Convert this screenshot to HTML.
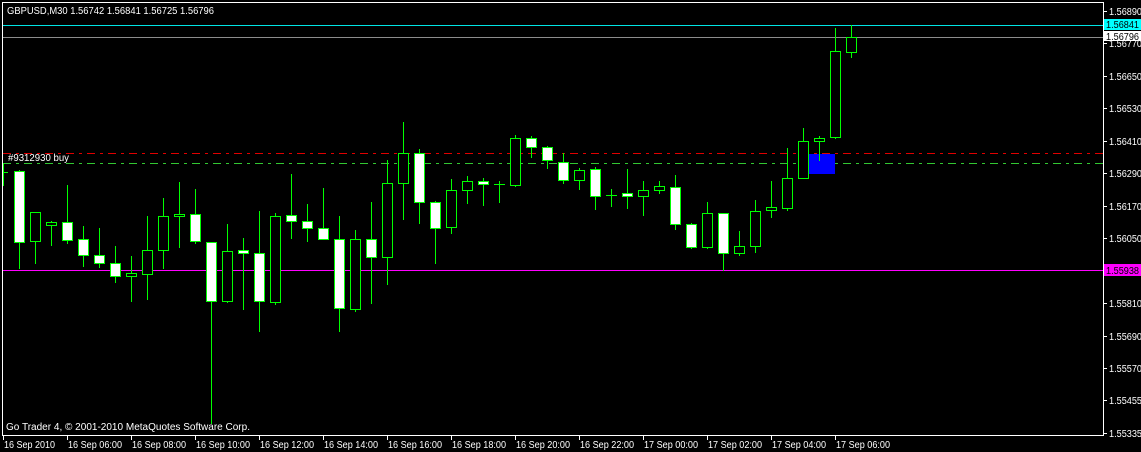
<!DOCTYPE html>
<html><head><meta charset="utf-8"><style>
html,body{margin:0;padding:0;background:#000;width:1141px;height:452px;overflow:hidden}
svg{display:block}
text{font-family:"Liberation Sans",sans-serif;font-size:10px;fill:#fff}
</style></head><body>
<svg width="1141" height="452" xmlns="http://www.w3.org/2000/svg" shape-rendering="crispEdges">
<rect width="1141" height="452" fill="#000"/>
<!-- frame -->
<rect x="2.5" y="2.5" width="1101" height="433" fill="none" stroke="#fff" stroke-width="1"/>
<!-- horizontal lines -->
<line x1="3" y1="25.5" x2="1103" y2="25.5" stroke="#00e5e5"/>
<line x1="3" y1="37.5" x2="1103" y2="37.5" stroke="#8c8c8c"/>
<line x1="3" y1="153.5" x2="1103" y2="153.5" stroke="#e00000" stroke-dasharray="8 5 3 5"/>
<line x1="3" y1="163.5" x2="1103" y2="163.5" stroke="#32c832" stroke-dasharray="8 5 3 5"/>
<rect x="809" y="154" width="26" height="20" fill="#0000ff"/>
<line x1="3" y1="270.5" x2="1103" y2="270.5" stroke="#ff00ff"/>
<g id="c" stroke="#00ff00" stroke-width="1"></g>
<!-- text -->
<text x="7" y="14" textLength="207" lengthAdjust="spacingAndGlyphs">GBPUSD,M30  1.56742 1.56841 1.56725 1.56796</text>
<text x="8" y="161" textLength="61" lengthAdjust="spacingAndGlyphs">#9312930 buy</text>
<text x="6" y="430" textLength="244" lengthAdjust="spacingAndGlyphs">Go Trader 4, © 2001-2010 MetaQuotes Software Corp.</text>
<g id="axis"></g>
<!-- price labels -->
<rect x="1104" y="19" width="37" height="11" fill="#00ffff"/>
<rect x="1104" y="31" width="37" height="10" fill="#fff"/>
<rect x="1104" y="264" width="37" height="12" fill="#ff00ff"/>
</svg>
<script>
var NS="http://www.w3.org/2000/svg";
var g=document.getElementById('c');
function el(n,a,p){var e=document.createElementNS(NS,n);for(var k in a)e.setAttribute(k,a[k]);(p||g).appendChild(e);return e;}
// partial left candle
el('line',{x1:3.5,y1:163,x2:3.5,y2:186});el('line',{x1:3,y1:172.5,x2:8,y2:172.5});
// [center, bodyTop, bodyBottom, wickTop, wickBottom, white]
var C=[[19,171,242,170,268,1],[35,212,241,212,263,0],[51,222,225,221,245,0],[67,222,240,185,243,1],[83,239,255,226,266,1],[99,255,263,228,267,1],[115,263,276,246,282,1],[131,273,276,256,301,0],[147,250,274,216,299,0],[163,216,250,198,268,0],[179,214,216,182,247,0],[195,214,241,189,243,1],[211,242,301,242,423,1],[227,251,301,224,302,0],[243,250,253,238,309,1],[259,253,301,211,331,1],[275,216,302,213,304,0],[291,215,221,174,238,1],[307,221,228,204,241,1],[323,228,239,188,239,1],[339,239,308,216,331,1],[355,239,309,230,311,0],[371,239,257,202,303,1],[387,183,257,160,284,0],[403,153,183,122,219,0],[419,153,202,149,223,1],[435,202,228,201,263,1],[451,190,227,179,233,0],[467,181,190,176,203,0],[483,181,184,178,205,1],[499,184,184,181,202,0],[515,138,185,135,186,0],[531,138,147,136,157,1],[547,147,160,146,168,1],[563,162,180,153,183,1],[579,170,180,168,189,0],[595,169,196,167,209,1],[611,195,195,189,206,0],[627,193,196,169,208,1],[643,190,196,181,215,0],[659,186,190,181,193,0],[675,187,224,175,229,1],[691,224,247,223,248,1],[707,213,247,202,248,0],[723,213,253,213,270,1],[739,246,253,231,255,0],[755,211,246,200,252,0],[771,207,210,181,217,0],[787,178,208,148,210,0],[803,141,178,128,178,0],[819,138,141,136,160,0],[835,51,137,28,138,0],[851,37,52,25,57,0]];
C.forEach(function(c){
  el('line',{x1:c[0]+.5,y1:c[3],x2:c[0]+.5,y2:c[4]+1});
  if(c[2]-c[1]<1){el('line',{x1:c[0]-5,y1:c[1]+.5,x2:c[0]+6,y2:c[1]+.5});}
  else el('rect',{x:c[0]-4.5,y:c[1]+.5,width:10,height:c[2]-c[1],fill:c[5]?'#fff':'#000'});
});
var ax=document.getElementById('axis');
var P=[["1.56890",11],["1.56770",43],["1.56650",76],["1.56530",108],["1.56410",141],["1.56290",173],["1.56170",206],["1.56050",238],["1.55938",270],["1.55810",303],["1.55690",336],["1.55570",368],["1.55455",400],["1.55335",433]];
P.forEach(function(p){
  el('line',{x1:1103,y1:p[1]+.5,x2:1107,y2:p[1]+.5,stroke:'#fff'},ax);
  var t=el('text',{x:1109,y:p[1]+4,textLength:33,lengthAdjust:'spacingAndGlyphs'},ax);t.textContent=p[0];
});
var L=["16 Sep 2010","16 Sep 06:00","16 Sep 08:00","16 Sep 10:00","16 Sep 12:00","16 Sep 14:00","16 Sep 16:00","16 Sep 18:00","16 Sep 20:00","16 Sep 22:00","17 Sep 00:00","17 Sep 02:00","17 Sep 04:00","17 Sep 06:00"];
L.forEach(function(s,i){
  var x=3+i*64;
  el('line',{x1:x+.5,y1:435,x2:x+.5,y2:440,stroke:'#fff'},ax);
  var t=el('text',{x:x+1,y:448,textLength:i==0?51:54,lengthAdjust:'spacingAndGlyphs'},ax);t.textContent=s;
});
// price label texts on top of boxes
[["1.56841",28,"#000"],["1.56796",40,"#000"],["1.55938",274,"#000"]].forEach(function(p){
  var t=el('text',{x:1106,y:p[1],textLength:33,lengthAdjust:'spacingAndGlyphs',style:'fill:'+p[2]},document.querySelector('svg'));t.textContent=p[0];
});
</script>
</body></html>
